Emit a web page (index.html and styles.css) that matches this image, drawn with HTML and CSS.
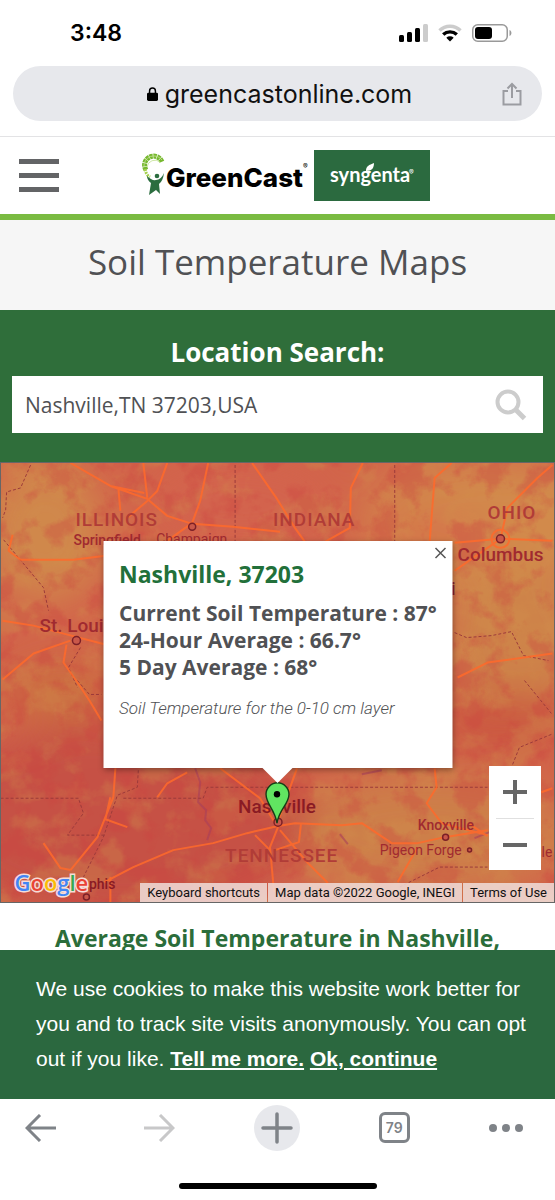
FILE: index.html
```html
<!DOCTYPE html>
<html lang="en">
<head>
  <meta charset="UTF-8">
  <meta name="viewport" content="width=device-width, initial-scale=1.0">
  <title>Soil Temperature Maps</title>
  <link rel="stylesheet" href="styles.css">
</head>
<body>
  <div class="status-bar">
    <span class="time">3:48</span>
    <div class="status-icons">
      <svg width="29" height="18" viewBox="0 0 29 18">
        <rect x="0" y="11" width="5" height="7" rx="1.5"/>
        <rect x="8" y="8" width="5" height="10" rx="1.5"/>
        <rect x="16" y="4" width="5" height="14" rx="1.5"/>
        <rect x="24" y="0" width="5" height="18" rx="1.5" fill="#ccc"/>
      </svg>
      <svg width="24" height="18" viewBox="0 0 24 18" fill="none" stroke-width="3.4">
        <path d="M1.5 6.5a15 15 0 0 1 21 0" stroke="#ccc"/>
        <path d="M5.2 10.5a10 10 0 0 1 13.6 0" stroke="#000"/>
        <path d="M12 17.5l-3.7-3.8a5.4 5.4 0 0 1 7.4 0z" fill="#000"/>
      </svg>
      <svg width="40" height="18" viewBox="0 0 40 18">
        <rect x=".75" y=".75" width="34.5" height="16.5" rx="5" fill="none" stroke="#999" stroke-width="1.5"/>
        <rect x="3" y="3" width="17" height="12" rx="3"/>
        <path d="M37.5 6c2.6 1.4 2.6 4.6 0 6z" fill="#999"/>
      </svg>
    </div>
  </div>

  <div class="address-bar">
    <div class="address">
      <svg class="lock" width="11" height="14" viewBox="0 0 12 15">
        <rect x="0" y="6" width="12" height="9" rx="1.5"/>
        <path d="M2.8 7V4.2a3.2 3.2 0 0 1 6.4 0V7" fill="none" stroke="#000" stroke-width="1.6"/>
      </svg>
      <span class="host">greencastonline.com</span>
      <button class="share" aria-label="Share">
        <svg width="20" height="24" viewBox="0 0 20 24" fill="none" stroke="#9b9ca1" stroke-width="2">
          <path d="M6 9H1.5v13.5h17V9H14M10 16V2M5.5 6.5L10 2l4.5 4.5"/>
        </svg>
      </button>
    </div>
  </div>

  <main class="page">
    <header class="site-header">
      <button class="menu" aria-label="Menu"><span></span><span></span><span></span></button>
      <a class="logo" href="#">
        <svg width="288" height="52" viewBox="0 0 288 52">
          <path d="M4 20A9 9 0 1 1 20 12" fill="none" stroke="#76b82f" stroke-width="5" stroke-dasharray="3.2 .6"/>
          <path d="M2 17A10 10 0 0 1 20 10M5 17A8 8 0 0 1 18 12" fill="none" stroke="#c2e08f" stroke-width=".8"/>
          <path d="M3 19q1 6 5 8" fill="none" stroke="#a3d04c" stroke-width="3" stroke-dasharray="2 1"/>
          <circle cx="15" cy="26" r="2.3" fill="#2b6d3f"/>
          <path d="M5 26q5 5 9 4 5 0 8-7-1 8-5 11l1 10-4-4-7 5 2-12q-4-3-4-7z" fill="#2b6d3f"/>
          <text class="logo-name" x="24" y="37">GreenCast</text>
          <text class="logo-mark" x="161" y="19">®</text>
          <rect x="172" y="0" width="116" height="51" fill="#2b6a3f"/>
          <text class="logo-brand" x="188" y="32">syngenta</text>
          <text class="logo-mark" x="267" y="25" fill="#fff">®</text>
          <path d="M224 21c0-5 3-6 8-8 0 5-2 8-8 8z" fill="#fff"/>
        </svg>
      </a>
    </header>

    <h1 class="page-title">Soil Temperature Maps</h1>

    <form class="search">
      <label for="location">Location Search:</label>
      <div class="search-box">
        <input type="text" id="location" value="Nashville,TN 37203,USA">
        <button type="button" aria-label="Search">
          <svg width="32" height="32" viewBox="0 0 32 32" fill="none" stroke="#ccc" stroke-width="4">
            <circle cx="13" cy="13" r="10.5"/>
            <path d="M20.5 20.5l9 9" stroke-width="5"/>
          </svg>
        </button>
      </div>
    </form>

    <section class="map">
      <svg class="map-canvas" viewBox="0 0 555 440" preserveAspectRatio="xMidYMid slice">
        <defs>
          <filter id="soft" x="-50%" y="-50%" width="200%" height="200%"><feGaussianBlur stdDeviation="20"/></filter>
          <filter id="warm" x="0" y="0" width="100%" height="100%" color-interpolation-filters="sRGB">
            <feTurbulence type="fractalNoise" baseFrequency=".024 .028" numOctaves="5" seed="8"/>
            <feColorMatrix values="0 0 0 0 .82  0 0 0 0 .56  0 0 0 0 .3  5 0 0 0 -2.4"/>
          </filter>
          <filter id="hot" x="0" y="0" width="100%" height="100%" color-interpolation-filters="sRGB">
            <feTurbulence type="fractalNoise" baseFrequency=".035" numOctaves="5" seed="21"/>
            <feColorMatrix values="0 0 0 0 .8  0 0 0 0 .26  0 0 0 0 .25  0 5 0 0 -2.4"/>
          </filter>
        </defs>
        <rect width="555" height="440" fill="#d2644a"/>
        <!-- temperature zones -->
        <g filter="url(#soft)">
          <ellipse cx="45" cy="70" rx="60" ry="70" fill="#d0884c"/>
          <ellipse cx="490" cy="60" rx="130" ry="65" fill="#d28a4b"/>
          <ellipse cx="520" cy="180" rx="75" ry="75" fill="#ce8349"/>
          <ellipse cx="430" cy="370" rx="140" ry="60" fill="#cd7f4a"/>
          <ellipse cx="60" cy="230" rx="60" ry="30" fill="#cb6e40"/>
          <ellipse cx="120" cy="360" rx="190" ry="100" fill="#c65145"/>
          <ellipse cx="430" cy="70" rx="60" ry="12" fill="#d75c4a"/>
          <ellipse cx="500" cy="260" rx="70" ry="30" fill="#cb5640"/>
          <ellipse cx="240" cy="40" rx="90" ry="40" fill="#d3634d"/>
        </g>
        <rect width="555" height="440" filter="url(#warm)" opacity=".35"/>
        <rect width="555" height="440" filter="url(#hot)" opacity=".35"/>
        <!-- rivers -->
        <g class="river">
          <path d="M195 306l5 14-2 20 8 8-1 10 6 8-4 12M362 312l20-4M340 372l8 10M475 376l15-6"/>
        </g>
        <!-- state lines -->
        <g class="border">
          <path d="M30 2L20 25 6 29 5 47 2 55M3 77l40 48 5 23M80 185l-12 20 9 20M235 2v80M395 2v80"/>
          <path d="M0 336h78l5 15-16 22h38M123 336h80l4-11h281M138 308l-1 17-20 8-8 24-6 18-20 40"/>
          <path d="M77 218l12 14h12M525 218l27 33M552 272l-32 13-8 20M455 170l12 5 25-2 20-4 12 24 25 5M400 425l40-20h48"/>
        </g>
        <!-- highways -->
        <g class="road">
          <path d="M70 0l40 23 37 13 20 17 25 8 41 3 47 5M143 0l4 35M167 0l-10 28-10 10-20 17M110 23l34 7M118 25l2 23M208 0l-8 38-8 22-25 18"/>
          <path d="M252 0l25 36 18 29 10 14M363 0l-12 25-1 40-25 14M452 0l-17 15-5 64M553 2l-15 13-30 30-7 31M455 80l46-4 52 2M455 108l46-32"/>
          <path d="M12 72L8 88l12 9h53l32-4M2 158l31 5 34 9 38 10M70 178l-37 13L2 217M66 182l-3 18 14 20 12 18 12 20"/>
          <path d="M458 215l30-15 65-9M115 306l-2 29-16 40-27 33M43 381l17 25 10 2M110 335l-5 22 22 8"/>
          <path d="M104 420l29-15 40-17 40-7 34-10 30-7 18-3 47 2 20-2 30 20h26l27-6 43-7M157 335l10-14 20-11M220 306l40 30 17 28"/>
          <path d="M435 306l2 19-10 16 15 20 46 12M418 385l-20 35M278 365l-8 20 4 45M280 368l28 33 20 20M275 388l24-8 2-18M277 362l20-56M542 330l11-4M110 415v25M470 362l18 12M255 373l15 15"/>
          <circle cx="501" cy="76" r="9"/>
        </g>
        <g class="town">
          <circle cx="192" cy="64" r="3.5"/><circle cx="76" cy="178" r="4"/><circle cx="501" cy="76" r="4"/>
          <circle cx="278" cy="360" r="4"/><circle cx="446" cy="375" r="3"/><circle cx="470" cy="388" r="2"/><circle cx="86" cy="435" r="3"/>
        </g>
        <g class="state-name">
          <text x="75" y="63">ILLINOIS</text>
          <text x="273" y="63">INDIANA</text>
          <text x="488" y="56">OHIO</text>
          <text x="225" y="400">TENNESSEE</text>
        </g>
        <g class="city-name">
          <text x="73" y="82">Springfield</text>
          <text x="156" y="81" class="small">Champaign</text>
          <text x="39" y="169" class="big">St. Louis</text>
          <text x="458" y="98" class="big">Columbus</text>
          <text x="456" y="132" text-anchor="end" class="dark big">Cincinnati</text>
          <text x="238" y="351" class="dark big">Nashville</text>
          <text x="418" y="368">Knoxville</text>
          <text x="380" y="393" class="small">Pigeon Forge</text>
          <text x="553" y="395" text-anchor="end" class="small">Asheville</text>
          <text x="115" y="427" text-anchor="end" class="dark">Memphis</text>
        </g>
        <path d="M277 361C275 347 266 342 266 332a11.500 11.500 0 0 1 23 0c0 10-10 15-12 29z" fill="#61e461" stroke="#163d16" stroke-width="1.4"/>
        <circle cx="277" cy="332" r="3.2"/>
        <text class="google" x="14" y="429"><tspan fill="#4285f4">G</tspan><tspan fill="#ea4335">o</tspan><tspan fill="#fbbc05">o</tspan><tspan fill="#4285f4">g</tspan><tspan fill="#34a853">l</tspan><tspan fill="#ea4335">e</tspan></text>
      </svg>

      <div class="info-window">
        <button class="close" aria-label="Close">
          <svg width="12" height="12" viewBox="0 0 12 12" stroke="#555" stroke-width="1.5"><path d="M1 1l10 10M11 1L1 11"/></svg>
        </button>
        <h2>Nashville, 37203</h2>
        <p class="reading">Current Soil Temperature : 87°</p>
        <p class="reading">24-Hour Average : 66.7°</p>
        <p class="reading">5 Day Average : 68°</p>
        <p class="note">Soil Temperature for the 0-10 cm layer</p>
      </div>

      <div class="zoom">
        <button aria-label="Zoom in"><svg width="24" height="24" viewBox="0 0 24 24" fill="#666"><path d="M10 0h4v10h10v4H14v10h-4V14H0v-4h10z"/></svg></button>
        <button aria-label="Zoom out"><svg width="24" height="24" viewBox="0 0 24 24" fill="#666"><path d="M0 10h24v4H0z"/></svg></button>
      </div>

      <div class="credits">
        <button>Keyboard shortcuts</button>
        <span>Map data ©2022 Google, INEGI</span>
        <a href="#">Terms of Use</a>
      </div>
    </section>

    <h2 class="average-title">Average Soil Temperature in Nashville,</h2>
  </main>

  <div class="cookies">
    <p>We use cookies to make this website work better for you and to track site visits anonymously. You can opt out if you like. <a href="#">Tell me more.</a> <a href="#">Ok, continue</a></p>
  </div>

  <nav class="toolbar">
    <button aria-label="Back">
      <svg width="32" height="28" viewBox="0 0 32 28" fill="none" stroke="#7f8388" stroke-width="3"><path d="M31 14H2M15 1L2 14l13 13"/></svg>
    </button>
    <button aria-label="Forward">
      <svg width="32" height="28" viewBox="0 0 32 28" fill="none" stroke="#c8c8c9" stroke-width="3"><path d="M1 14h29M17 1l13 13-13 13"/></svg>
    </button>
    <button class="new-tab" aria-label="New tab">
      <svg width="32" height="32" viewBox="0 0 32 32" stroke="#7f8388" stroke-width="3.5" stroke-linecap="round"><path d="M16 2v28M2 16h28"/></svg>
    </button>
    <button><span class="tabs">79</span></button>
    <button class="more" aria-label="More">
      <svg width="34" height="8" viewBox="0 0 34 8" fill="#7f8388"><circle cx="4" cy="4" r="4"/><circle cx="17" cy="4" r="4"/><circle cx="30" cy="4" r="4"/></svg>
    </button>
  </nav>
  <div class="home-bar"></div>
</body>
</html>
```
FILE: styles.css
```css
* {
  box-sizing: border-box;
}
body {
  margin: 0;
  height: 100vh;
  display: flex;
  flex-direction: column;
  background: #fff;
  font-family: "Open Sans", sans-serif;
  color: #505154;
}
h1, h2, p {
  margin: 0;
}
button {
  padding: 0;
  border: none;
  background: none;
  cursor: pointer;
}
svg {
  display: block;
}

/* browser top */
.status-bar {
  display: flex;
  justify-content: space-between;
  align-items: center;
  height: 66px;
  padding: 0 43px 0 70px;
}
.time {
  font: 600 23px Inter, sans-serif;
  color: #000;
}
.status-icons {
  display: flex;
  gap: 10px;
}
.address-bar {
  padding: 0 13px 15px;
  border-bottom: 1px solid #e3e3e5;
}
.address {
  position: relative;
  display: flex;
  justify-content: center;
  align-items: center;
  gap: 7px;
  height: 55px;
  padding-left: 4px;
  border-radius: 28px;
  background: #e7e8ec;
}
.host {
  font: 25px/50px Inter, sans-serif;
  color: #111;
}
.share {
  position: absolute;
  right: 20px;
}

/* site */
.page {
  flex: 1;
  min-height: 0;
  overflow: hidden;
}
.site-header {
  position: relative;
  display: flex;
  justify-content: center;
  align-items: center;
  height: 83px;
  padding-left: 17px;
  border-bottom: 6px solid #7abb42;
}
.menu {
  position: absolute;
  left: 19px;
  display: flex;
  flex-direction: column;
  gap: 9px;
  width: 40px;
}
.menu span {
  height: 5px;
  background: #636466;
}
.logo-name {
  font: 800 26px Inter, sans-serif;
}
.logo-brand {
  font: 700 20px Lato, sans-serif;
  fill: #fff;
}
.logo-mark {
  font: 7px Inter, sans-serif;
}
.page-title {
  height: 90px;
  background: #f6f6f6;
  font-size: 35px;
  font-weight: 500;
  line-height: 84px;
  text-align: center;
}
.search {
  padding: 26px 12px 29px;
  background: #2f6e3a;
}
.search label {
  display: block;
  height: 40px;
  font-size: 26px;
  font-weight: 700;
  line-height: 32px;
  text-align: center;
  color: #fff;
}
.search-box {
  display: flex;
  align-items: center;
  height: 57px;
  padding: 0 16px 0 13px;
  background: #fff;
}
.search-box input {
  flex: 1;
  min-width: 0;
  padding: 0;
  border: none;
  outline: none;
  font: 21px "Open Sans", sans-serif;
  color: #505154;
}

/* map */
.map {
  position: relative;
  height: 441px;
  border: 1px solid #666;
  overflow: hidden;
  font-family: Roboto, sans-serif;
}
.map-canvas {
  width: 100%;
  height: 100%;
}
.road {
  fill: none;
  stroke: #ff6a2b;
  stroke-width: 2;
  stroke-linejoin: round;
  opacity: .85;
}
.border {
  fill: none;
  stroke: #9c3a3a;
  stroke-width: 1;
  stroke-dasharray: 3 2;
}
.river {
  fill: none;
  stroke: #a8405a;
  stroke-width: 2;
  opacity: .6;
}
.town {
  fill: #c9584a;
  stroke: #7c2027;
  stroke-width: 1.5;
}
.state-name {
  font-size: 19px;
  font-weight: 500;
  letter-spacing: 1px;
  fill: #b13c37;
}
.city-name {
  font-size: 14px;
  font-weight: 500;
  fill: #a02a30;
}
.city-name .small {
  font-weight: 400;
}
.city-name .big {
  font-size: 19px;
}
.city-name .dark {
  fill: #8a1a24;
}
.google {
  font: 600 22px "Open Sans", sans-serif;
  stroke: #f6dcd8;
  stroke-width: 3px;
  paint-order: stroke;
}
.info-window {
  position: absolute;
  top: 78px;
  left: 50%;
  width: 349px;
  height: 227px;
  padding: 16px;
  transform: translateX(-50%);
  background: #fff;
  box-shadow: 0 2px 6px rgba(0, 0, 0, .35);
}
.info-window::after {
  content: "";
  position: absolute;
  top: 100%;
  left: 50%;
  border: 15px solid transparent;
  border-top-color: #fff;
  border-bottom: none;
  transform: translateX(-50%);
}
.info-window h2 {
  margin-bottom: 9px;
  font: 700 23px/34px "Open Sans", sans-serif;
  color: #22703a;
}
.close {
  position: absolute;
  top: 6px;
  right: 6px;
}
.reading {
  font: 700 21px/27px "Open Sans", sans-serif;
  white-space: nowrap;
}
.note {
  margin-top: 15px;
  font-size: 17px;
  font-style: italic;
  font-weight: 300;
  line-height: 24px;
}
.zoom {
  position: absolute;
  right: 13px;
  bottom: 32px;
  width: 52px;
  background: #fff;
}
.zoom button {
  display: flex;
  justify-content: center;
  align-items: center;
  width: 38px;
  height: 52px;
  margin: 0 7px;
}
.zoom button + button {
  border-top: 1px solid #e0e0e0;
}
.credits {
  position: absolute;
  right: 0;
  bottom: 0;
  display: flex;
  gap: 1px;
  font-size: 13px;
  line-height: 19px;
}
.credits > * {
  padding: 0 7px;
  background: rgba(240, 222, 218, .85);
  font: inherit;
  color: #111;
  text-decoration: none;
}
.average-title {
  padding-top: 18px;
  font-size: 23px;
  line-height: 34px;
  text-align: center;
  color: #2b6d3a;
}

/* cookie notice */
.cookies {
  height: 149px;
  padding: 21px 24px 0 36px;
  background: #2b683f;
  font: 21px/35px "Liberation Sans", sans-serif;
  color: #fff;
}
.cookies a {
  font-weight: 700;
  color: #fff;
}

/* browser bottom */
.toolbar {
  display: flex;
  justify-content: space-between;
  align-items: center;
  height: 57px;
  padding: 0 32px 0 18px;
}
.toolbar button {
  display: flex;
  justify-content: center;
  align-items: center;
  width: 46px;
  height: 46px;
  border-radius: 50%;
}
.toolbar .new-tab {
  background: #e7e8ec;
}
.toolbar .more {
  width: 34px;
}
.tabs {
  width: 31px;
  height: 31px;
  border: 3px solid #7f8388;
  border-radius: 6px;
  font: 600 14px/25px Inter, sans-serif;
  color: #7f8388;
}
.home-bar {
  width: 198px;
  height: 6px;
  margin: 27px auto 11px;
  border-radius: 3px;
  background: #000;
}
```
